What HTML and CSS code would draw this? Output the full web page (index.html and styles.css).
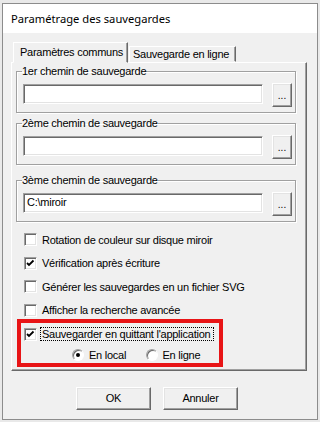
FILE: index.html
```html
<!DOCTYPE html>
<html lang="fr">
<head>
    <meta charset="UTF-8">
    <meta name="viewport" content="width=device-width, initial-scale=1.0">
    <title>Paramétrage des sauvegardes</title>
    <link rel="stylesheet" href="styles.css">
</head>
<body>
<div class="window">
    <div class="titlebar">Paramétrage des sauvegardes</div>
    <div class="content">
        <div class="tabs">
            <div class="tab active">Paramètres communs</div>
            <div class="tab">Sauvegarde en ligne</div>
        </div>
        <div class="panel">
            <fieldset class="group first">
                <legend>1er chemin de sauvegarde</legend>
                <div class="path-row">
                    <div class="field"></div>
                    <div class="btn browse">...</div>
                </div>
            </fieldset>
            <fieldset class="group second">
                <legend>2ème chemin de sauvegarde</legend>
                <div class="path-row">
                    <div class="field"></div>
                    <div class="btn browse">...</div>
                </div>
            </fieldset>
            <fieldset class="group third">
                <legend>3ème chemin de sauvegarde</legend>
                <div class="path-row">
                    <div class="field">C:\miroir</div>
                    <div class="btn browse">...</div>
                </div>
            </fieldset>

            <div class="checks">
                <div class="check"><span class="box"></span><span class="text">Rotation de couleur sur disque miroir</span></div>
                <div class="check"><span class="box checked"><svg viewBox="0 0 11 11"><polyline points="2,5 4,7 8.5,2.5"/></svg></span><span class="text">Vérification après écriture</span></div>
                <div class="check"><span class="box"></span><span class="text">Générer les sauvegardes en un fichier SVG</span></div>
                <div class="check"><span class="box"></span><span class="text">Afficher la recherche avancée</span></div>
            </div>

            <div class="highlight">
                <div class="check"><span class="box checked"><svg viewBox="0 0 11 11"><polyline points="2,5 4,7 8.5,2.5"/></svg></span><span class="text focus">Sauvegarder en quittant l'application</span></div>
                <div class="radios">
                    <div class="radio"><span class="dot selected"></span><span class="text">En local</span></div>
                    <div class="radio"><span class="dot"></span><span class="text">En ligne</span></div>
                </div>
            </div>
        </div>
        <div class="actions">
            <div class="btn action">OK</div>
            <div class="btn action">Annuler</div>
        </div>
    </div>
</div>
</body>
</html>
```

FILE: styles.css
```css
body {
    margin: 0;
    padding: 3px 0 0 2px;
    background-color: #e9e9e9;
    font-family: 'Liberation Sans', Arial, sans-serif;
    font-size: 11px;
    letter-spacing: -0.25px;
    color: #000000;
    white-space: nowrap;
}

.window {
    width: 314px;
    height: 415px;
    border: 1px solid #8c8c8c;
    background-color: #f0f0f0;
}

.titlebar {
    height: 29px;
    line-height: 29px;
    padding-left: 8px;
    background-color: #ffffff;
    font-family: 'Noto Sans', sans-serif;
    font-size: 11.2px;
    letter-spacing: 0;
    color: #000000;
}

.content {
    padding: 9px 9px 0 8px;
}

/* tabs */
.tabs {
    display: flex;
    align-items: flex-end;
    height: 20px;
    padding-left: 2px;
}

.tab {
    height: 16px;
    line-height: 15px;
    padding: 0 5px 0 3px;
    border: 1px solid;
    border-color: #ffffff #696969 transparent #ffffff;
    box-shadow: inset -1px 0 #a0a0a0;
    box-sizing: border-box;
}

.tab.active {
    position: relative;
    width: 115px;
    height: 21px;
    line-height: 18px;
    padding-left: 6px;
    margin-bottom: -1px;
    background-color: #f0f0f0;
    z-index: 1;
}

.tab + .tab {
    width: 107px;
    margin-left: 1px;
}

.panel {
    width: 296px;
    height: 309px;
    box-sizing: border-box;
    border: 1px solid;
    border-color: #ffffff #696969 #696969 #ffffff;
    box-shadow: inset -1px -1px #a0a0a0;
    padding: 2px 10px 0 4px;
}

/* group boxes */
.group {
    margin: 0;
    padding: 5px 3px 5px 6px;
    min-width: 0;
    border: 1px solid #a0a0a0;
    box-shadow: inset 1px 1px #ffffff, 1px 1px #ffffff;
}

.group legend {
    padding: 0;
    margin-left: -1px;
    line-height: 13px;
}

.group.second {
    margin-top: 4px;
}

.group.third {
    margin-top: 9px;
}

.path-row {
    display: flex;
    align-items: flex-start;
    gap: 9px;
}

.field {
    width: 240px;
    height: 20px;
    margin-top: 1px;
    box-sizing: border-box;
    padding-left: 3px;
    line-height: 17px;
    background-color: #ffffff;
    border: 1px solid;
    border-color: #a0a0a0 #ffffff #ffffff #a0a0a0;
    box-shadow: inset 1px 1px #696969, inset -1px -1px #e3e3e3;
}

/* buttons */
.btn {
    box-sizing: border-box;
    text-align: center;
    background-color: #f0f0f0;
    border: 1px solid;
    border-color: #ffffff #696969 #696969 #ffffff;
    box-shadow: inset -1px -1px #a0a0a0, inset 1px 1px #e3e3e3;
}

.browse {
    width: 20px;
    height: 24px;
    line-height: 24px;
    font-size: 10px;
    letter-spacing: 0;
}

/* check boxes */
.checks {
    padding: 6px 0 0 8px;
}

.check {
    display: flex;
    align-items: center;
    height: 23.5px;
}

.box {
    width: 13px;
    height: 13px;
    box-sizing: border-box;
    flex-shrink: 0;
    background-color: #ffffff;
    border: 1px solid;
    border-color: #a0a0a0 #ffffff #ffffff #a0a0a0;
    box-shadow: inset 1px 1px #696969, inset -1px -1px #e3e3e3;
}

.box svg {
    display: block;
    width: 11px;
    height: 11px;
}

.box polyline {
    fill: none;
    stroke: #000000;
    stroke-width: 1.8;
}

.check .text {
    margin-left: 5px;
}

.check .focus {
    margin-left: 3px;
    padding: 0 1px;
    width: 170px;
    overflow: hidden;
    line-height: 12px;
    border: 1px dotted #000000;
}

/* framed option */
.highlight {
    width: 206px;
    height: 48px;
    box-sizing: border-box;
    margin: -3px 0 0 1px;
    padding: 0 0 0 3px;
    border: 4px solid #e81416;
}

.highlight .check {
    height: 22px;
}

.radios {
    display: flex;
    margin-top: 3px;
    padding-left: 48px;
}

.radio {
    display: flex;
    align-items: center;
    width: 88px;
    height: 14px;
}

.dot {
    width: 12px;
    height: 12px;
    box-sizing: border-box;
    border-radius: 50%;
    background-color: #ffffff;
    border: 1px solid;
    border-color: #a0a0a0 #ffffff #ffffff #a0a0a0;
    box-shadow: inset 1px 1px #696969;
    display: flex;
    align-items: center;
    justify-content: center;
}

.dot.selected::after {
    content: "";
    width: 4px;
    height: 4px;
    border-radius: 50%;
    background-color: #000000;
}

.radio .text {
    margin-left: 5px;
}

/* dialog buttons */
.actions {
    display: flex;
    gap: 12px;
    padding: 16px 0 0 65px;
}

.action {
    width: 75px;
    height: 23px;
    line-height: 21px;
}
```
